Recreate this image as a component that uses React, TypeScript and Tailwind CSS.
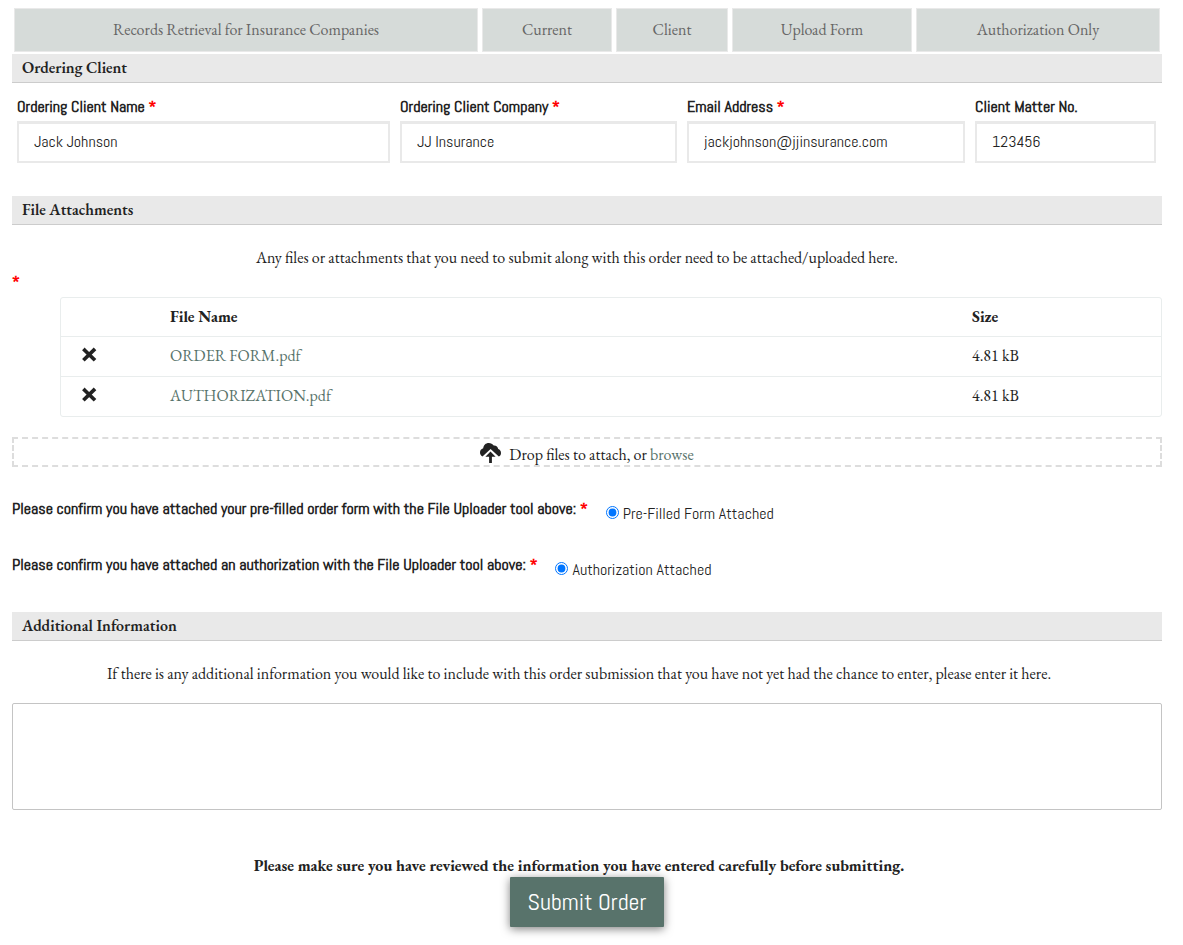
import { useState } from "react";
import type { ReactNode } from "react";

const steps = [
    "Records Retrieval for Insurance Companies",
    "Current",
    "Client",
    "Upload Form",
    "Authorization Only",
];

const clientFields = [
    { id: "clientName", label: "Ordering Client Name", value: "Jack Johnson", type: "text", required: true },
    { id: "clientCompany", label: "Ordering Client Company", value: "JJ Insurance", type: "text", required: true },
    { id: "email", label: "Email Address", value: "jackjohnson@jjinsurance.com", type: "email", required: true },
    { id: "matterNo", label: "Client Matter No.", value: "123456", type: "text", required: false },
];

const initialFiles = [
    { name: "ORDER FORM.pdf", size: "4.81 kB" },
    { name: "AUTHORIZATION.pdf", size: "4.81 kB" },
];

function Required() {
    return <span className="font-bold text-[#ff0000]">*</span>;
}

function SectionTitle({ children }: { children: ReactNode }) {
    return (
        <h2 className="h-[29px] border-b border-[#cccccc] bg-[#e9e9e9] px-[10px] text-[16px] leading-7 font-semibold">
            {children}
        </h2>
    );
}

function RemoveIcon() {
    return (
        <svg className="h-4 w-4" viewBox="0 0 16 16" fill="none" stroke="#222222" aria-hidden="true">
            <path d="m3.7 3.2 9 8.8M12.7 3.2l-9 8.8" strokeWidth="3.7" strokeLinecap="square" strokeLinejoin="round" />
        </svg>
    );
}

function CloudUploadIcon() {
    return (
        <svg className="h-5 w-[21px]" viewBox="0 0 21 20" fill="#222222" aria-hidden="true">
            <path d="M2.5 13.5C.8 12.8 0 11.4 0 9.6c0-2.1 1.2-3.7 3.2-4.3C3.5 2.2 5.7 0 8.8 0c2.1 0 3.8.9 4.9 2.4 2.4-.2 4.3 1.3 4.5 3.6 1.7.6 2.8 2 2.8 3.9 0 1.6-.8 2.9-2.2 3.6L10.6 6z" />
            <path d="m10.5 8.5 5.1 5.3h-3.7V20H9.1v-6.2H5.4z" />
        </svg>
    );
}

function ConfirmRow({ name, question, option }: { name: string; question: string; option: string }) {
    return (
        <div
            role="radiogroup"
            aria-labelledby={`${name}-question`}
            className="flex items-start gap-[18px] font-['Abel','Liberation_Sans_Narrow','Liberation_Sans',sans-serif] text-[16px] leading-6"
        >
            <span id={`${name}-question`} className="font-bold">
                {question} <Required />
            </span>
            <label className="mt-[5px] flex items-center gap-1">
                <input type="radio" name={name} defaultChecked className="mb-1 h-[13px] w-[13px] accent-[#0075ff]" />
                {option}
            </label>
        </div>
    );
}

export default function App() {
    const [files, setFiles] = useState(initialFiles);

    return (
        <form
            className="bg-white pt-2 pr-[21px] pb-4 pl-3 font-['EB_Garamond','Liberation_Serif',serif] text-[16px] leading-6 text-[#222222]"
            onSubmit={(e) => e.preventDefault()}
        >
            <nav className="grid grid-cols-[464fr_130fr_112fr_180fr_244fr] gap-1 px-[2px] pb-[2px]">
                {steps.map((step) => (
                    <button
                        key={step}
                        type="button"
                        className="h-11 border border-[#e9e9e9] bg-[#d6dbd9] text-[#666666]"
                    >
                        {step}
                    </button>
                ))}
            </nav>

            <section>
                <SectionTitle>Ordering Client</SectionTitle>
                <div className="grid grid-cols-[373fr_277fr_278fr_181fr] gap-[10px] pt-3 pr-[6px] pl-[5px] font-['Abel','Liberation_Sans_Narrow','Liberation_Sans',sans-serif]">
                    {clientFields.map((field) => (
                        <div key={field.id}>
                            <label htmlFor={field.id} className="block h-[26px] font-bold whitespace-nowrap">
                                {field.label} {field.required && <Required />}
                            </label>
                            <input
                                id={field.id}
                                type={field.type}
                                defaultValue={field.value}
                                className="h-[42px] w-full border-2 border-t-[3px] border-[#e9e9e9] bg-white px-[15px] pb-[2px]"
                            />
                        </div>
                    ))}
                </div>
            </section>

            <section className="mt-[33px]">
                <SectionTitle>File Attachments</SectionTitle>
                <p className="mt-[21px] pr-5 text-center">
                    Any files or attachments that you need to submit along with this order need to be attached/uploaded here.
                </p>
                <div className="h-[27px] font-['Abel','Liberation_Sans_Narrow','Liberation_Sans',sans-serif]">
                    <Required />
                </div>
                <div className="ml-12 rounded-[3px] border border-[#e9eded]">
                    <table className="w-full table-fixed text-left">
                        <thead>
                            <tr className="h-[38px]">
                                <th className="w-[109px]" />
                                <th className="font-bold">File Name</th>
                                <th className="w-[189px] font-bold">Size</th>
                            </tr>
                        </thead>
                        <tbody>
                            {files.map((file) => (
                                <tr key={file.name} className="h-10 border-t border-[#e9eded]">
                                    <td className="pb-[2px] pl-5">
                                        <button
                                            type="button"
                                            aria-label={`Remove ${file.name}`}
                                            className="block"
                                            onClick={() => setFiles(files.filter((f) => f !== file))}
                                        >
                                            <RemoveIcon />
                                        </button>
                                    </td>
                                    <td>
                                        <a href="#" className="text-[#58736b]">
                                            {file.name}
                                        </a>
                                    </td>
                                    <td>{file.size}</td>
                                </tr>
                            ))}
                        </tbody>
                    </table>
                </div>
                <div className="mt-5 flex h-[30px] items-center justify-center gap-2 border-2 border-dashed border-[#dddddd] pt-[2px]">
                    <CloudUploadIcon />
                    <span className="pt-1">
                        Drop files to attach, or{" "}
                        <button type="button" className="text-[#58736b]">
                            browse
                        </button>
                    </span>
                </div>
            </section>

            <section className="mt-[30px] flex flex-col gap-[27px]">
                <ConfirmRow
                    name="orderForm"
                    question="Please confirm you have attached your pre-filled order form with the File Uploader tool above:"
                    option="Pre-Filled Form Attached"
                />
                <ConfirmRow
                    name="authorization"
                    question="Please confirm you have attached an authorization with the File Uploader tool above:"
                    option="Authorization Attached"
                />
            </section>

            <section className="mt-[30px]">
                <SectionTitle>Additional Information</SectionTitle>
                <label htmlFor="additionalInfo" className="mt-[21px] block pr-4 text-center">
                    If there is any additional information you would like to include with this order submission that you
                    have not yet had the chance to enter, please enter it here.
                </label>
                <textarea
                    id="additionalInfo"
                    className="mt-[17px] block h-[107px] w-full resize-none rounded-[2px] border border-[#c4c4c4] bg-white p-2"
                />
            </section>

            <p className="mt-11 pr-4 text-center leading-[23px] font-bold">
                Please make sure you have reviewed the information you have entered carefully before submitting.
            </p>
            <button
                type="submit"
                className="mx-auto block h-[50px] rounded-[1px] bg-[#58736b] px-[18px] font-['Abel','Liberation_Sans_Narrow','Liberation_Sans',sans-serif] text-[24px] text-white shadow-[0_2px_10px_rgba(0,0,0,0.5)]"
            >
                Submit Order
            </button>
        </form>
    );
}
